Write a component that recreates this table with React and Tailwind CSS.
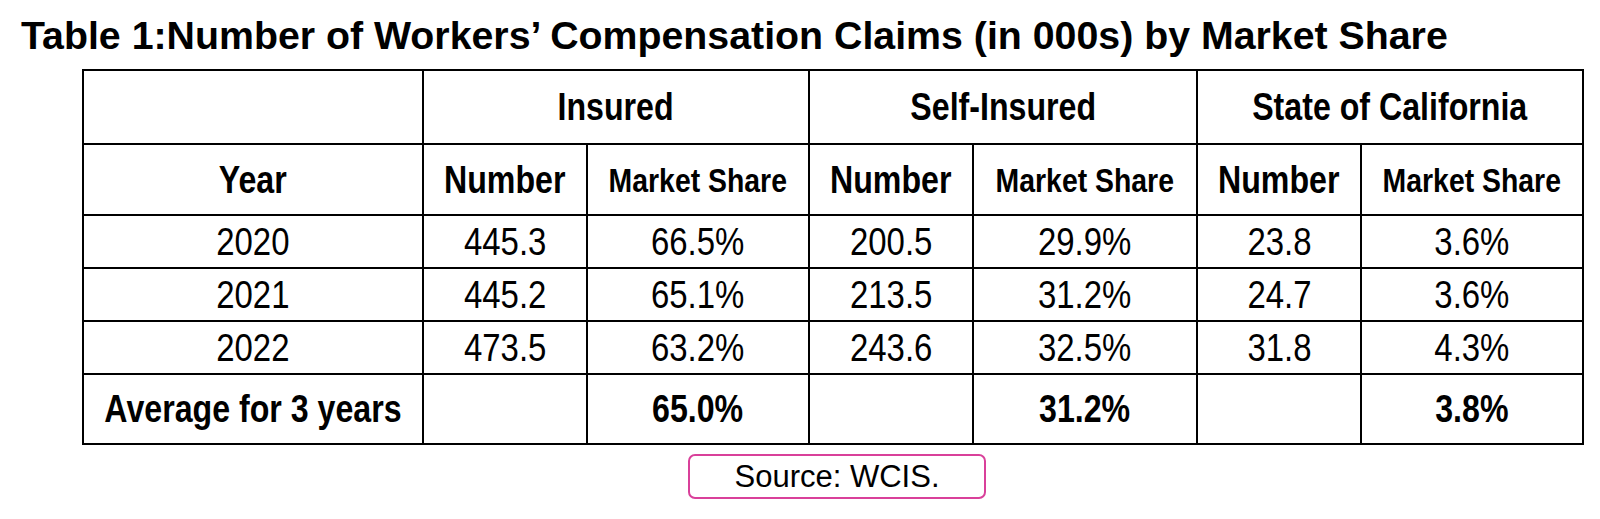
import React from 'react';

const rows = [
  { year: '2020', ins: '445.3', insShare: '66.5%', self: '200.5', selfShare: '29.9%', state: '23.8', stateShare: '3.6%' },
  { year: '2021', ins: '445.2', insShare: '65.1%', self: '213.5', selfShare: '31.2%', state: '24.7', stateShare: '3.6%' },
  { year: '2022', ins: '473.5', insShare: '63.2%', self: '243.6', selfShare: '32.5%', state: '31.8', stateShare: '4.3%' },
];

const cell = 'border-2 border-black text-center align-middle p-0 whitespace-nowrap';

// no narrow face installed, so squeeze Liberation Sans to Arial Narrow proportions.
// flex + justify-center keeps wide labels centred even when they overflow the cell.
function N({ children, bold }) {
  return (
    <div className="flex justify-center">
      <span className={bold ? 'shrink-0 whitespace-nowrap scale-x-[0.835]' : 'shrink-0 whitespace-nowrap scale-x-[0.855]'}>
        {children}
      </span>
    </div>
  );
}

export default function App() {
  return (
    <div className="w-[1600px] h-[519px] bg-white text-black overflow-hidden font-['Liberation_Sans',Arial,sans-serif]">
      {/* Title */}
      <h1 className="pt-[16px] pl-[21px] text-[39.3px] leading-none font-bold">
        Table 1:Number of Workers’ Compensation Claims (in 000s) by Market Share
      </h1>

      {/* Table */}
      <div className="mt-[14px] ml-[82px] w-[1500px]">
        <table className="w-[1500px] table-fixed border-collapse border-2 border-black text-[38.5px] leading-none">
          <colgroup>
            <col className="w-[340px]" />
            <col className="w-[164px]" />
            <col className="w-[222px]" />
            <col className="w-[164px]" />
            <col className="w-[224px]" />
            <col className="w-[164px]" />
            <col className="w-[222px]" />
          </colgroup>
          <thead>
            <tr className="h-[74px] font-bold">
              <th className={cell} />
              <th className={cell} colSpan={2}><N bold>Insured</N></th>
              <th className={cell} colSpan={2}><N bold>Self-Insured</N></th>
              <th className={cell} colSpan={2}><N bold>State of California</N></th>
            </tr>
            <tr className="h-[71px] font-bold">
              <th className={cell}><N bold>Year</N></th>
              <th className={cell}><N bold>Number</N></th>
              <th className={`${cell} text-[34px]`}><N bold>Market Share</N></th>
              <th className={cell}><N bold>Number</N></th>
              <th className={`${cell} text-[34px]`}><N bold>Market Share</N></th>
              <th className={cell}><N bold>Number</N></th>
              <th className={`${cell} text-[34px]`}><N bold>Market Share</N></th>
            </tr>
          </thead>
          <tbody>
            {rows.map((r) => (
              <tr key={r.year} className="h-[53px]">
                <td className={cell}><N>{r.year}</N></td>
                <td className={cell}><N>{r.ins}</N></td>
                <td className={cell}><N>{r.insShare}</N></td>
                <td className={cell}><N>{r.self}</N></td>
                <td className={cell}><N>{r.selfShare}</N></td>
                <td className={cell}><N>{r.state}</N></td>
                <td className={cell}><N>{r.stateShare}</N></td>
              </tr>
            ))}
            <tr className="h-[70px] font-bold">
              <td className={cell}><N bold>Average for 3 years</N></td>
              <td className={cell} />
              <td className={cell}><N bold>65.0%</N></td>
              <td className={cell} />
              <td className={cell}><N bold>31.2%</N></td>
              <td className={cell} />
              <td className={cell}><N bold>3.8%</N></td>
            </tr>
          </tbody>
        </table>
      </div>

      {/* Source note */}
      <div className="mt-[9px] ml-[82px] w-[1500px] flex justify-center pl-[10px]">
        <div className="w-[298px] h-[45px] flex items-center justify-center rounded-[7px] border-2 border-[#d9409a] text-[31px] leading-none">
          Source: WCIS.
        </div>
      </div>
    </div>
  );
}
